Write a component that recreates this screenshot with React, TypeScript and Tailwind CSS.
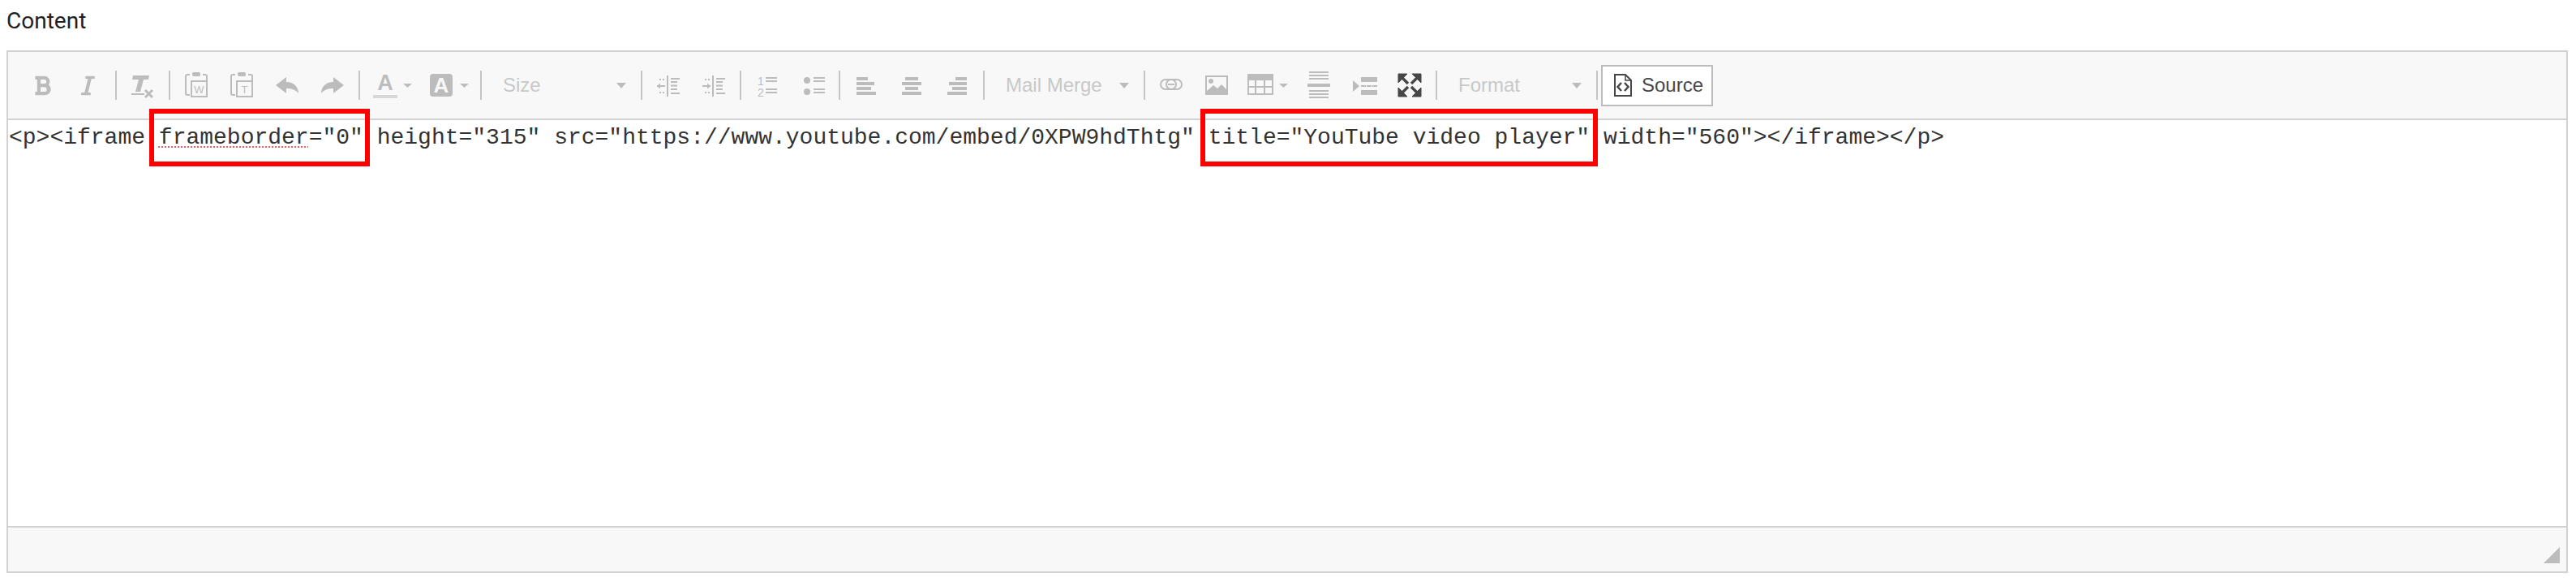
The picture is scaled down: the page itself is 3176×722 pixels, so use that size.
import React from 'react';
import { FaBold, FaItalic } from 'react-icons/fa';

const GRAY = '#bcbcbc';

const Sep = () => <div className="w-[2px] h-[36px] bg-[#c4c4c4] shrink-0" />;

// every toolbar icon is drawn on a 36px high canvas, y=0 sits at the top of the separators
const Cell = ({ w = 56, children }: { w?: number; children: React.ReactNode }) => (
  <svg width={w} height={36} viewBox={`0 0 ${w} 36`} className="shrink-0" fill={GRAY}>
    {children}
  </svg>
);

const Caret = ({ x }: { x: number }) => <polygon points={`${x},16 ${x + 11},16 ${x + 5.5},21`} />;

const ClearIcon = () => (
  <Cell>
    <polygon points="16,6 36,6 35,11 29,11 25,26 19,26 23,11 15,11" />
    <rect x="14" y="28" width="16" height="2" />
    <path d="M31 24 L40 33 M40 24 L31 33" stroke={GRAY} strokeWidth="3" fill="none" />
  </Cell>
);

const PasteIcon = ({ letter }: { letter: string }) => (
  <Cell>
    <rect x="23" y="2" width="10" height="5" rx="2" />
    <path d="M20 5 H17 a2 2 0 0 0 -2 2 V28 a2 2 0 0 0 2 2 H20" fill="none" stroke={GRAY} strokeWidth="2" />
    <path d="M36 5 H39 a2 2 0 0 1 2 2 V12" fill="none" stroke={GRAY} strokeWidth="2" />
    <rect x="22" y="13" width="19" height="19" fill="none" stroke={GRAY} strokeWidth="2" />
    <text x="31.5" y="28" textAnchor="middle" fontSize="13" fontFamily="'Liberation Sans', sans-serif">
      {letter}
    </text>
  </Cell>
);

const UndoIcon = ({ flip }: { flip?: boolean }) => (
  <Cell>
    <path
      d="M14 18 L27 8 V14 C36 14 42 20 42 28 C38 23 33 22 27 22 V28 Z"
      transform={flip ? 'matrix(-1 0 0 1 56 0)' : undefined}
    />
  </Cell>
);

const TextColorIcon = () => (
  <Cell w={70}>
    <text x="27" y="24" textAnchor="middle" fontSize="27" fontWeight="700" fontFamily="'Liberation Sans', sans-serif">
      A
    </text>
    <rect x="12" y="30" width="30" height="4" fill="#d8d8d8" />
    <Caret x={49} />
  </Cell>
);

const BgColorIcon = () => (
  <Cell w={70}>
    <rect x="12" y="4" width="28" height="28" rx="4" />
    <text x="26" y="27" textAnchor="middle" fontSize="26" fontWeight="700" fill="#f8f8f8" fontFamily="'Liberation Sans', sans-serif">
      A
    </text>
    <Caret x={49} />
  </Cell>
);

const IndentIcon = ({ out }: { out?: boolean }) => (
  <Cell>
    <rect x="26" y="6" width="2" height="26" />
    <rect x="17" y="10" width="2" height="2" />
    <rect x="21" y="10" width="2" height="2" />
    <rect x="17" y="26" width="2" height="2" />
    <rect x="21" y="26" width="2" height="2" />
    <rect x="14" y="18" width="10" height="2" />
    {out ? (
      <polygon points="24,19 20,15.5 20,22.5" />
    ) : (
      <polygon points="14,19 18,15.5 18,22.5" />
    )}
    <rect x="31" y="9" width="11" height="2" />
    <rect x="31" y="13" width="8" height="2" />
    <rect x="31" y="17.5" width="8" height="2" />
    <rect x="31" y="22" width="8" height="2" />
    <rect x="31" y="27" width="11" height="2" />
  </Cell>
);

const ListLines = ({ x }: { x: number }) => (
  <>
    <rect x={x} y="8" width="14" height="2" />
    <rect x={x} y="12" width="14" height="2" />
    <rect x={x} y="22" width="14" height="2" />
    <rect x={x} y="26" width="14" height="2" />
  </>
);

const NumberedIcon = () => (
  <Cell>
    <text x="20" y="18" textAnchor="middle" fontSize="14" fontFamily="'Liberation Sans', sans-serif">1</text>
    <text x="20" y="32" textAnchor="middle" fontSize="14" fontFamily="'Liberation Sans', sans-serif">2</text>
    <ListLines x={26} />
  </Cell>
);

const BulletIcon = () => (
  <Cell>
    <circle cx="21" cy="12" r="4" />
    <circle cx="21" cy="26" r="4" />
    <ListLines x={29} />
  </Cell>
);

const AlignIcon = ({ rows }: { rows: [number, number][] }) => (
  <Cell>
    {rows.map(([x, w], i) => (
      <rect key={i} x={x} y={8 + i * 6} width={w} height={4} />
    ))}
  </Cell>
);

const LinkIcon = () => (
  <Cell>
    <rect x="15" y="11" width="19" height="12" rx="6" fill="none" stroke={GRAY} strokeWidth="2" />
    <rect x="22" y="11" width="19" height="12" rx="6" fill="none" stroke={GRAY} strokeWidth="2" />
    <rect x="24" y="16" width="8" height="2" />
  </Cell>
);

const ImageIcon = () => (
  <Cell>
    <rect x="15" y="7" width="26" height="22" fill="none" stroke={GRAY} strokeWidth="2" />
    <circle cx="21" cy="13" r="3" />
    <polygon points="16,28 16,25 24,18 29,22 34,17 40,23 40,28" />
  </Cell>
);

const TableIcon = () => (
  <Cell w={70}>
    <rect x="10" y="4" width="32" height="8" />
    <rect x="11" y="11" width="30" height="18" fill="none" stroke={GRAY} strokeWidth="2" />
    <rect x="19" y="11" width="2" height="18" />
    <rect x="30" y="11" width="2" height="18" />
    <rect x="11" y="19" width="30" height="2" />
    <Caret x={49} />
  </Cell>
);

const HrIcon = () => (
  <Cell>
    <rect x="16" y="1" width="24" height="2" />
    <rect x="16" y="5" width="24" height="2" />
    <rect x="16" y="9" width="24" height="2" />
    <rect x="14" y="16" width="28" height="4" />
    <rect x="16" y="24" width="24" height="2" />
    <rect x="16" y="28" width="24" height="2" />
    <rect x="16" y="32" width="24" height="2" />
  </Cell>
);

const PageBreakIcon = () => (
  <Cell>
    <polygon points="14,12 22,19 14,26" />
    <rect x="24" y="8" width="20" height="6" />
    <rect x="24" y="18" width="6" height="2" />
    <rect x="31" y="18" width="6" height="2" />
    <rect x="38" y="18" width="6" height="2" />
    <rect x="24" y="24" width="20" height="6" />
  </Cell>
);

const MaximizeIcon = () => (
  <Cell>
    <g fill="#474747" stroke="#474747">
      <path d="M14 4 H25 L14 15 Z" />
      <path d="M42 4 H31 L42 15 Z" />
      <path d="M14 32 H25 L14 21 Z" />
      <path d="M42 32 H31 L42 21 Z" />
      <path d="M17 7 L26 16 M39 7 L30 16 M17 29 L26 20 M39 29 L30 20" strokeWidth="3.5" fill="none" />
    </g>
  </Cell>
);

const SourceIcon = () => (
  <svg width="22" height="28" viewBox="0 0 22 28" fill="none" className="shrink-0">
    <path d="M1 1 H14 L21 8 V27 H1 Z" stroke="#474747" strokeWidth="2" />
    <path d="M14 1 V8 H21" stroke="#474747" strokeWidth="1.5" />
    <path d="M9 11 L4.5 16 L9 21 M13 11 L17.5 16 L13 21" stroke="#474747" strokeWidth="2.5" />
  </svg>
);

const Combo = ({ label }: { label: string }) => (
  <div className="w-[196px] h-[36px] shrink-0 flex items-center justify-between pl-[26px] pr-[18px] text-[24px] text-[#c8c8c8]">
    <span>{label}</span>
    <svg width="12" height="7" viewBox="0 0 12 7" fill={GRAY}>
      <polygon points="0,0 12,0 6,7" />
    </svg>
  </div>
);

const Toolbar = () => (
  <div className="h-[82px] bg-[#f8f8f8] border-b-2 border-[#d1d1d1] box-content flex items-center font-['Liberation_Sans',sans-serif]">
    <div className="w-[132px] pl-[9px] flex items-center justify-center text-[#bcbcbc] shrink-0">
      <div className="w-[56px] flex justify-center"><FaBold size={27} /></div>
      <div className="w-[56px] flex justify-center"><FaItalic size={27} /></div>
    </div>
    <Sep />
    <div className="w-[64px] flex justify-center shrink-0"><ClearIcon /></div>
    <Sep />
    <div className="w-[232px] flex justify-center shrink-0">
      <PasteIcon letter="W" />
      <PasteIcon letter="T" />
      <UndoIcon />
      <UndoIcon flip />
    </div>
    <Sep />
    <div className="w-[148px] flex justify-center shrink-0">
      <TextColorIcon />
      <BgColorIcon />
    </div>
    <Sep />
    <Combo label="Size" />
    <Sep />
    <div className="w-[120px] flex justify-center shrink-0">
      <IndentIcon />
      <IndentIcon out />
    </div>
    <Sep />
    <div className="w-[120px] flex justify-center shrink-0">
      <NumberedIcon />
      <BulletIcon />
    </div>
    <Sep />
    <div className="w-[176px] flex justify-center shrink-0">
      <AlignIcon rows={[[16, 14], [16, 22], [16, 18], [16, 24]]} />
      <AlignIcon rows={[[20, 16], [16, 24], [20, 16], [16, 24]]} />
      <AlignIcon rows={[[26, 14], [18, 22], [22, 18], [16, 24]]} />
    </div>
    <Sep />
    <Combo label="Mail Merge" />
    <Sep />
    <div className="w-[358px] flex justify-center shrink-0">
      <LinkIcon />
      <ImageIcon />
      <TableIcon />
      <HrIcon />
      <PageBreakIcon />
      <MaximizeIcon />
    </div>
    <Sep />
    <Combo label="Format" />
    <Sep />
    <button className="ml-[4px] w-[138px] h-[51px] bg-white border-2 border-[#bcbcbc] flex items-center pl-[14px] gap-[12px] text-[24px] text-[#474747]">
      <SourceIcon />
      <span>Source</span>
    </button>
  </div>
);

export default function App() {
  return (
    <div className="w-[3176px] h-[722px] bg-white pl-[8px] pr-[10px]">
      <div className="h-[62px] text-[28px] leading-[28px] pt-[12px] text-[#222] font-['Roboto',sans-serif]">Content</div>
      <div className="relative border-2 border-[#d1d1d1]">
        <Toolbar />
        <div className="h-[500px] bg-white pl-[1px] pt-[6px] text-[28px] leading-[32px] text-[#333] font-['Liberation_Mono',monospace] whitespace-pre">
          {'<p><iframe '}
          <span className="underline decoration-dotted decoration-2 decoration-[#ef5f5f] underline-offset-[3px]">frameborder</span>
          {'="0" height="315" src="https://www.youtube.com/embed/0XPW9hdThtg" title="YouTube video player" width="560"></iframe></p>'}
        </div>
        <div className="h-[56px] bg-[#f8f8f8] border-t-2 border-[#d1d1d1] flex justify-end items-start pr-[8px] pt-[24px]">
          <svg width="20" height="20" viewBox="0 0 20 20" fill={GRAY}>
            <polygon points="20,0 20,20 0,20" />
          </svg>
        </div>
        <div className="absolute left-[174px] top-[70px] w-[272px] h-[71px] border-[6px] border-[#ff0000]" />
        <div className="absolute left-[1470px] top-[70px] w-[490px] h-[71px] border-[6px] border-[#ff0000]" />
      </div>
    </div>
  );
}
